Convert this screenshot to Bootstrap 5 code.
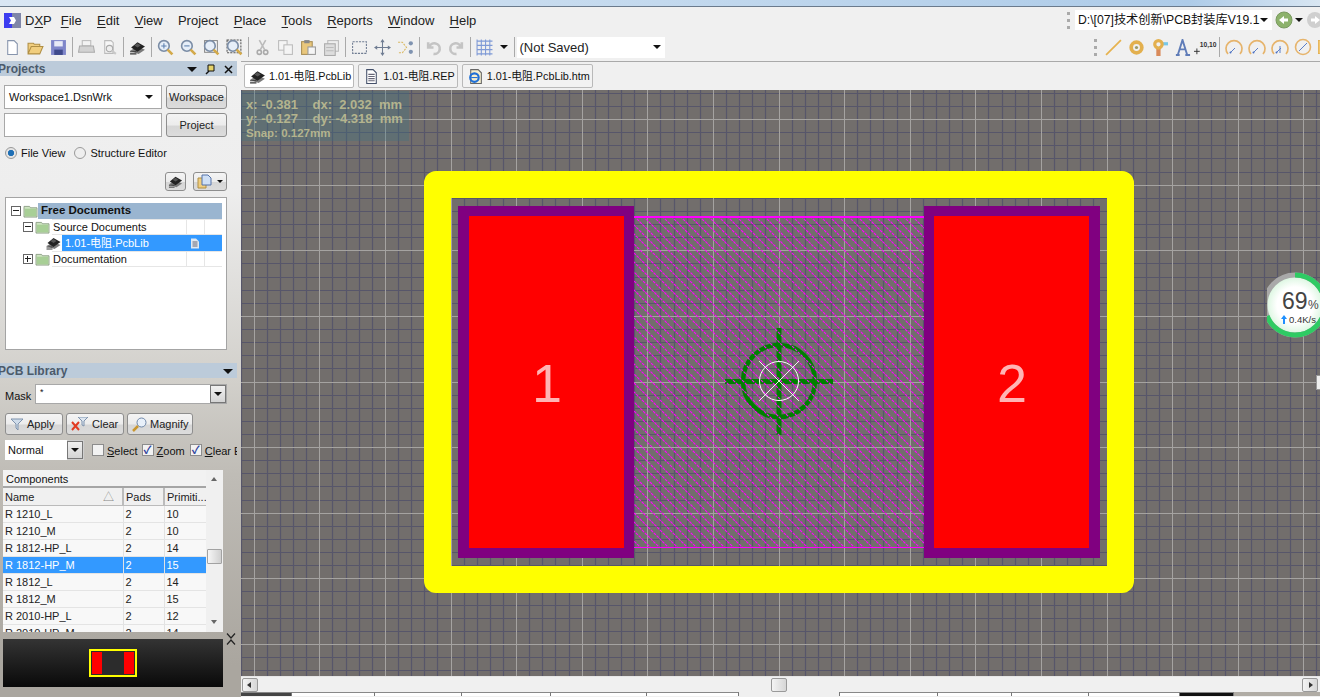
<!DOCTYPE html>
<html lang="en">
<head>
<meta charset="UTF-8" />
<title>DXP - PCB Library</title>
<link href="https://cdn.jsdelivr.net/npm/bootstrap@5.3.0/dist/css/bootstrap.min.css" rel="stylesheet"/>
<style>
  html, body { margin:0; height:697px; overflow:hidden; }
  body { font-family:"Liberation Sans","Noto Sans CJK SC",sans-serif; font-size:11px; color:#111; background:#f0f0f0; line-height:1; }
  .shell { width:1320px; height:697px; overflow:hidden; position:relative; }
  .title-strip { height:6px; background:linear-gradient(90deg,#d9e6f3,#c3d9ee 50%,#adcbe8 90%,#d8e6f2); border-bottom:1px solid #6a7a8c; box-sizing:content-box; }
  .menu-row { height:26px; background:#f0f0f0; padding-left:4px; }
  .dxp-logo { width:17px; height:15px; margin-right:4px; }
  .menu-item { font-size:13px; color:#222; margin-right:15.3px; }
  .menu-item u { text-underline-offset:2px; }
  .addr-box { width:197px; height:20px; background:#fff; font-size:12.2px; padding-left:3px; color:#111; white-space:nowrap; flex:none; }
  .grip { width:4px; height:17px; border-left:3px dotted #aaa; }
  .tool-row { height:28px; background:#f0f0f0; padding-left:.5px; }
  .slot { width:23px; height:22px; flex:none; }
  .slot svg { width:17px; height:17px; }
  .tool-sep { width:5px; height:20px; flex:none; }
  .tool-sep::after { content:""; display:block; width:1px; height:20px; margin-left:2px; background:#a9a9a9; }
  .save-box { width:148px; height:21px; background:#fff; font-size:13px; padding-left:3px; color:#222; }
  .caret-d { width:0; height:0; border-left:4px solid transparent; border-right:4px solid transparent; border-top:4px solid #111; display:block; }
  .tab-row { height:29px; background:#f0f0f0; border-top:1px solid #a9a9a9; padding:2px 0 0 244px; gap:4px; }
  .doc-tab { height:24px; padding:0 2px 0 4px; gap:3px; border:1px solid #b9b9b9; border-radius:2px; font-size:10.8px; background:#f2f2f2; white-space:nowrap; }
  .doc-tab.is-on { background:#fff; }
  .doc-tab svg { width:17px; height:17px; }
  .work { height:606px; }
  .side { width:241px; height:636px; margin-top:-29px; background:linear-gradient(180deg,#f0f0f0 0,#eeeeee 20%,#d2d0cb 50%,#bfbcb6 65%,#aaa69f 95%); z-index:2; position:relative; flex:none; }
  .panel-head { height:15px; width:237px; background:#bccbda; color:#4b5a6b; font-weight:700; font-size:12px; padding-top:1px; }
  .panel-head span.lbl { margin-left:-2px; }
  .field { background:#fff; border:1px solid #a8a8a8; font-size:11px; padding-left:4px; }
  .win-btn { background:linear-gradient(180deg,#f4f4f4 0,#ececec 50%,#d6d6d6 55%,#dcdcdc 100%); border:1px solid #8e8e8e; border-radius:3px; font-size:11px; color:#222; white-space:nowrap; padding-top:1px; }
  .row-a { height:24px; margin:0 14px 0 4px; gap:4px; }
  .radio-dot { width:12px; height:12px; border-radius:50%; border:1px solid #9a9a9a; background:#eee; display:inline-block; }
  .radio-dot.is-on { background:radial-gradient(circle,#1f6fb5 0,#1f6fb5 40%,#e4e4e4 48%); }
  .tree-box { height:153px; margin:7px 14px 0 5px; background:#fff; border:1px solid #a4a4a4; position:relative; padding-top:5px; }
  .tree-line { height:16px; font-size:11px; white-space:nowrap; }
  .tree-line svg { flex:none; }
  .plus-box { width:10px; height:10px; border:1px solid #666; margin-right:2px; position:relative; flex:none; background:#fff; }
  .plus-box::before { content:""; position:absolute; left:1px; right:1px; top:3px; height:2px; border-top:1px solid #222; }
  .plus-box.is-shut::after { content:""; position:absolute; top:1px; bottom:1px; left:3px; width:1px; background:#222; }
  .free-bar { background:#9ab5d0; font-weight:700; flex:1; height:16px; margin-right:4px; padding-left:3px; font-size:11.5px; }
  .cell-a { flex:1; height:16px; border-bottom:1px solid #e6e6e6; border-top:1px solid #e6e6e6; padding-left:1px; }
  .cell-b { width:18px; height:16px; border:1px solid #e6e6e6; border-right:0; }
  .sel-bar { flex:1; height:16px; background:#3399ff; color:#fff; margin-right:4px; padding-left:3px; }
  .lib-btn { height:22px; gap:3px; padding:0 3px 0 4px; }
  .check-a { width:12px; height:12px; border:1px solid #8c8c8c; background:#f2f2f2; flex:none; margin-right:3px; color:#2b3f9c; font-size:11px; font-weight:700; text-align:center; font-style:normal; }
  .drop-b { width:16px; height:18px; background:linear-gradient(#f0f0f0,#d4d4d4); border:1px solid #777; flex:none; }
  .comp-wrap { height:162px; width:220px; margin:10px 0 0 3px; background:#f0f0f0; }
  .comp-tab { width:203px; height:162px; overflow:hidden; background:#f7f7f7; }
  .comp-title { height:18px; padding:4px 0 0 3px; background:#f2f2f2; border-bottom:2px solid #a5a5a5; font-size:11px; }
  .comp-grid { margin:0; width:203px; table-layout:fixed; font-size:11px; border-collapse:collapse; }
  .comp-grid td, .comp-grid th { height:17px; padding:2px 0 0 2px; font-weight:400; background:#f8f8f8; color:#222; border:0; border-right:1px solid #e2e2e2; border-bottom:1px solid #e4e4e4; white-space:nowrap; overflow:hidden; vertical-align:middle; }
  .comp-grid th { background:#f0f0f0; border-right:2px solid #bbb; border-bottom:1px solid #bbb; }
  .comp-grid tr.picked td { background:#3399ff; color:#fff; }
  .comp-bar { width:17px; height:162px; position:relative; background:#f0f0f0; }
  .comp-thumb { position:absolute; left:1px; top:79px; width:15px; height:15px; background:linear-gradient(90deg,#f6f6f6,#d0d0d0); border:1px solid #a2a2a2; border-radius:1px; }
  .ar-up { position:absolute; left:5px; top:7px; width:0; height:0; border-left:3.5px solid transparent; border-right:3.5px solid transparent; border-bottom:4px solid #666; }
  .ar-dn { position:absolute; left:5px; top:150px; width:0; height:0; border-left:3.5px solid transparent; border-right:3.5px solid transparent; border-top:4px solid #666; }
  .mini-view { width:220px; height:48px; margin:7px 0 0 3px; background:linear-gradient(180deg,#343434,#090909); }
  .mini-frame { width:48px; height:28px; border:2px solid #ff0; background:#2c2c2c; padding:1px 1px; }
  .mini-pad { width:10px; height:22px; background:#f00; }
  .mini-close { position:absolute; left:226px; top:572px; }
  .canvas-area { flex:1; height:586px; position:relative; overflow:hidden; background:#726e6c; }
  .canvas-area svg.board { display:block; width:1079px; height:586px; }
  .pad-num { font-family:"Liberation Sans",sans-serif; font-size:54px; fill:#ffb4b4; }
  .hud-box { position:absolute; left:0; top:1px; width:168px; height:50px; background:rgba(60,115,130,.33); color:#b4b48e; font-family:"Liberation Sans",sans-serif; font-weight:700; font-size:13px; padding:7px 0 0 5px; white-space:pre; line-height:14px; }
  .hud-snap { font-size:11.5px; line-height:14px; }
  .hscroll { height:16px; background:#f0f0f0; position:relative; border-top:1px solid #e6e6e6; }
  .hs-btn { position:absolute; top:1px; width:16px; height:14px; background:linear-gradient(90deg,#f4f4f4,#d6d6d6); border:1px solid #999; border-radius:2px; }
  .hs-btn.is-left { left:1px; } .hs-btn.is-right { right:2px; } .hs-btn.is-mid { left:530px; }
  .hs-btn.is-left::after { content:""; position:absolute; left:4px; top:3px; border-right:4px solid #333; border-top:3px solid transparent; border-bottom:3px solid transparent; }
  .hs-btn.is-right::after { content:""; position:absolute; left:6px; top:3px; border-left:4px solid #333; border-top:3px solid transparent; border-bottom:3px solid transparent; }
  .foot-tabs { height:4px; background:#b0aca5; overflow:hidden; }
  .foot-tabs div { height:4px; background:#fff; border-top:1px solid #888; border-right:1px solid #777; }
  .net-ball { position:absolute; left:1267px; top:272px; width:66px; height:66px; z-index:3; }
  .edge-nub { position:absolute; left:1316px; top:375px; width:5px; height:15px; background:#efefef; border:1px solid #999; z-index:3; }
</style>
</head>
<body>
<svg width="0" height="0" class="d-none">
  <defs>
    <symbol id="i-chip" viewBox="0 0 16 16">
      <path d="M1 11l7-4 7 3-6 4z" fill="#7a7a7a"/><path d="M2 8l6-5 7 4-7 5z" fill="#222"/><path d="M5 6l3-2 3 2-3 2z" fill="#555"/><path d="M1 12h6M1 14h6" stroke="#333"/>
    </symbol>
    <symbol id="i-folder" viewBox="0 0 16 14">
      <path d="M1 3V1.500h6l1 1.500h7v10H1z" fill="#cfe5c2" stroke="#8d9f85"/><rect x="2" y="4" width="12" height="8" fill="#a8cf96"/>
    </symbol>
    <symbol id="i-doc" viewBox="0 0 16 16">
      <path d="M3.500 1.500h6l3 3v10h-9z" fill="#fff" stroke="#44506a"/><path d="M5 6h6M5 8h6M5 10h6M5 12h6" stroke="#667"/>
    </symbol>
    <symbol id="i-glass" viewBox="0 0 16 16">
      <circle cx="6.500" cy="6.500" r="5" fill="#e6eef8" stroke="#7b8da6" stroke-width="1.500"/><path d="M10 10l4.500 4.500" stroke="#d3a94a" stroke-width="2.500"/>
    </symbol>
    <symbol id="i-arc" viewBox="0 0 18 18">
      <path d="M3 16A8 8 0 1 1 15 16" fill="none" stroke="#e6b46c" stroke-width="1.700"/><path d="M5 15l5-5" stroke="#5a7ec8"/><circle cx="5.500" cy="14.500" r="1" fill="#4a6ec0"/>
    </symbol>
  </defs>
</svg>

<div class="shell">
  <div class="title-strip"></div>

  <div class="menu-row d-flex align-items-center">
    <svg class="dxp-logo" viewBox="0 0 17 15"><rect width="17" height="15" fill="#7f86a8"/><rect width="8" height="15" fill="#3c3cf0"/><path d="M5 4h5l2 3.500-2 3.500H5l2-3.500z" fill="#fff"/></svg>
    <span class="menu-item" style="margin-right:9px">D<u>X</u>P</span>
    <span class="menu-item"><u>F</u>ile</span>
    <span class="menu-item"><u>E</u>dit</span>
    <span class="menu-item"><u>V</u>iew</span>
    <span class="menu-item">Pro<u>j</u>ect</span>
    <span class="menu-item"><u>P</u>lace</span>
    <span class="menu-item"><u>T</u>ools</span>
    <span class="menu-item"><u>R</u>eports</span>
    <span class="menu-item"><u>W</u>indow</span>
    <span class="menu-item"><u>H</u>elp</span>
    <div class="ms-auto d-flex align-items-center">
      <span class="grip me-1"></span>
      <div class="addr-box d-flex align-items-center justify-content-between"><span>D:\[07]技术创新\PCB封装库V19.1</span><i class="caret-d me-1"></i></div>
      <svg width="18" height="18" viewBox="0 0 18 18" style="margin-left:3px"><circle cx="9" cy="9" r="8" fill="#8db26c" stroke="#7a9a60"/><path d="M4 9l5-4v2.500h4v3H9V13z" fill="#fff"/></svg>
      <i class="caret-d" style="margin-left:2px"></i>
      <svg width="18" height="18" viewBox="0 0 18 18" style="margin:0 -4px 0 3px"><circle cx="9" cy="9" r="8" fill="#cfcfcf"/><path d="M14 9L9 5v2.500H5v3h4V13z" fill="#fff"/></svg>
    </div>
  </div>

  <div class="tool-row d-flex align-items-center">
    <div class="slot d-flex align-items-center justify-content-center"><svg viewBox="0 0 16 16"><path d="M3.500 1.500h6l3 3v10h-9z" fill="#fff" stroke="#8795ad"/></svg></div>
    <div class="slot d-flex align-items-center justify-content-center"><svg viewBox="0 0 16 16"><path d="M1 14V4h5l1 1h5v2H4L1 14l3-7h11l-3 7z" fill="#f1ce7e" stroke="#b08f45"/></svg></div>
    <div class="slot d-flex align-items-center justify-content-center"><svg viewBox="0 0 16 16"><rect x="1" y="1" width="14" height="14" fill="#7f86c9"/><rect x="4" y="2" width="8" height="5" fill="#e8eaf6"/><rect x="4" y="10" width="8" height="5" fill="#3f4a8c"/></svg></div>
    <div class="tool-sep"></div>
    <div class="slot d-flex align-items-center justify-content-center"><svg viewBox="0 0 16 16"><rect x="4" y="1.500" width="8" height="5" fill="#f2f2f2" stroke="#bbb"/><path d="M1.500 6.500h13l1 6h-15z" fill="#d2d2d2" stroke="#aaa"/></svg></div>
    <div class="slot d-flex align-items-center justify-content-center"><svg viewBox="0 0 16 16"><path d="M3.500 1.500h6l2 2v10h-8z" fill="#f6f6f6" stroke="#bbb"/><circle cx="8" cy="9" r="3" fill="#eee" stroke="#aaa"/><path d="M10 11l4 3" stroke="#c8c8c8" stroke-width="2"/></svg></div>
    <div class="tool-sep"></div>
    <div class="slot d-flex align-items-center justify-content-center"><svg><use href="#i-chip"/></svg></div>
    <div class="tool-sep"></div>
    <div class="slot d-flex align-items-center justify-content-center"><svg viewBox="0 0 16 16"><use href="#i-glass"/><path d="M4 6.500h5M6.500 4v5" stroke="#5b7fae"/></svg></div>
    <div class="slot d-flex align-items-center justify-content-center"><svg viewBox="0 0 16 16"><use href="#i-glass"/><path d="M4 6.500h5" stroke="#5b7fae"/></svg></div>
    <div class="slot d-flex align-items-center justify-content-center"><svg viewBox="0 0 16 16"><rect x="1.500" y="1.500" width="12" height="11" fill="#fff" stroke="#888"/><use href="#i-glass"/></svg></div>
    <div class="slot d-flex align-items-center justify-content-center"><svg viewBox="0 0 16 16"><rect x="1" y="1" width="13" height="12" fill="none" stroke="#555" stroke-dasharray="2 1"/><use href="#i-glass"/></svg></div>
    <div class="tool-sep"></div>
    <div class="slot d-flex align-items-center justify-content-center"><svg viewBox="0 0 16 16"><path d="M5 1l5 9M11 1L6 10" stroke="#bbb" stroke-width="1.500"/><circle cx="5" cy="12.500" r="2" fill="none" stroke="#aaa" stroke-width="1.500"/><circle cx="11" cy="12.500" r="2" fill="none" stroke="#aaa" stroke-width="1.500"/></svg></div>
    <div class="slot d-flex align-items-center justify-content-center"><svg viewBox="0 0 16 16"><rect x="1.500" y="1.500" width="8" height="9" fill="#f4f4f4" stroke="#bbb"/><rect x="6.500" y="5.500" width="8" height="9" fill="#f4f4f4" stroke="#bbb"/></svg></div>
    <div class="slot d-flex align-items-center justify-content-center"><svg viewBox="0 0 16 16"><rect x="1.500" y="2.500" width="10" height="12" fill="#e9c77c" stroke="#a98f55"/><rect x="4" y="1" width="5" height="3" fill="#888"/><rect x="7.500" y="7.500" width="7" height="7" fill="#f5f5f5" stroke="#999"/></svg></div>
    <div class="slot d-flex align-items-center justify-content-center"><svg viewBox="0 0 16 16"><rect x="4.500" y="1.500" width="10" height="10" fill="#eee" stroke="#bbb"/><rect x="1.500" y="4.500" width="10" height="11" fill="#ddd" stroke="#aaa"/><path d="M3 8h7M3 11h7" stroke="#bbb"/></svg></div>
    <div class="tool-sep"></div>
    <div class="slot d-flex align-items-center justify-content-center"><svg viewBox="0 0 16 16"><rect x="1.500" y="2.500" width="13" height="11" fill="none" stroke="#6f7c92" stroke-dasharray="2 1"/></svg></div>
    <div class="slot d-flex align-items-center justify-content-center"><svg viewBox="0 0 16 16"><path d="M8 1v14M1 8h14" stroke="#6f7c92"/><path d="M8 0l2 3H6zM8 16l2-3H6zM0 8l3-2v4zM16 8l-3-2v4z" fill="#6f7c92"/></svg></div>
    <div class="slot d-flex align-items-center justify-content-center"><svg viewBox="0 0 16 16"><path d="M1 3l4 0 4 5-4 5H1" fill="none" stroke="#d9b860" stroke-dasharray="2 1"/><circle cx="13" cy="4" r="2" fill="#7f93b0"/><circle cx="13" cy="12" r="2" fill="#7f93b0"/></svg></div>
    <div class="tool-sep"></div>
    <div class="slot d-flex align-items-center justify-content-center"><svg viewBox="0 0 16 16"><path d="M3 3v5h5M4 8a5 5 0 1 1 4 6" fill="none" stroke="#c4c4c4" stroke-width="2.500"/></svg></div>
    <div class="slot d-flex align-items-center justify-content-center"><svg viewBox="0 0 16 16"><path d="M13 3v5H8M12 8a5 5 0 1 0-4 6" fill="none" stroke="#c4c4c4" stroke-width="2.500"/></svg></div>
    <div class="tool-sep"></div>
    <div class="slot d-flex align-items-center justify-content-center"><svg viewBox="0 0 16 16"><path d="M1 .5v15M5 .5v15M9 .5v15M13 .5v15M.5 2h15M.5 6h15M.5 10h15M.5 14h15" stroke="#7f9ad6"/></svg></div>
    <i class="caret-d ms-1 me-1"></i>
    <div class="tool-sep"></div>
    <div class="save-box d-flex align-items-center justify-content-between"><span>(Not Saved)</span><i class="caret-d me-1"></i></div>
    <div class="ms-auto d-flex align-items-center">
      <span class="grip me-1"></span>
      <div class="slot d-flex align-items-center justify-content-center"><svg viewBox="0 0 16 16"><path d="M1 15L15 1" stroke="#e6b24e" stroke-width="1.600"/></svg></div>
      <div class="slot d-flex align-items-center justify-content-center"><svg viewBox="0 0 16 16"><circle cx="8" cy="8" r="5" fill="none" stroke="#e3b04e" stroke-width="3.500"/><circle cx="8" cy="8" r="1.500" fill="#996"/></svg></div>
      <div class="slot d-flex align-items-center justify-content-center"><svg viewBox="0 0 16 16"><path d="M10 3h6v3h-6z" fill="#78c8e8"/><path d="M5 9h4v7H5z" fill="#d98a5a"/><circle cx="7" cy="5" r="3.500" fill="none" stroke="#e3b04e" stroke-width="3"/></svg></div>
      <div class="slot d-flex align-items-center justify-content-center"><svg viewBox="0 0 18 18"><path d="M2 17h4M12 17h5M4 17L9 1l5 16M6 11h6" fill="none" stroke="#5f7cb8" stroke-width="2"/></svg></div>
      <div class="slot d-flex align-items-center justify-content-center"><svg viewBox="0 0 24 16" style="width:24px"><path d="M0 12h6M3 9v6" stroke="#333"/><text x="6" y="8" font-size="7" font-family="Liberation Sans" font-weight="700" fill="#333">10,10</text></svg></div>
      <div class="tool-sep"></div>
      <div class="slot d-flex align-items-center justify-content-center"><svg style="width:18px;height:18px"><use href="#i-arc"/></svg></div>
      <div class="slot d-flex align-items-center justify-content-center"><svg style="width:18px;height:18px"><use href="#i-arc"/></svg></div>
      <div class="slot d-flex align-items-center justify-content-center"><svg style="width:18px;height:18px"><use href="#i-arc"/><path d="M9 8v7" stroke="#5a7ec8"/></svg></div>
      <div class="slot d-flex align-items-center justify-content-center"><svg viewBox="0 0 18 18" style="width:18px;height:18px"><circle cx="9" cy="9" r="7.500" fill="none" stroke="#e6b46c" stroke-width="1.600"/><path d="M5 13l8-8" stroke="#5a7ec8"/></svg></div>
      <svg width="10" height="14" viewBox="0 0 10 14" class="ms-1" style="margin-right:-8px"><rect width="10" height="14" fill="#f4c76e" stroke="#d8a850"/></svg>
    </div>
  </div>

  <div class="tab-row d-flex align-items-start">
    <div class="doc-tab is-on d-flex align-items-center"><svg><use href="#i-chip"/></svg><span>1.01-电阻.PcbLib</span></div>
    <div class="doc-tab d-flex align-items-center"><svg><use href="#i-doc"/></svg><span>1.01-电阻.REP</span></div>
    <div class="doc-tab d-flex align-items-center"><svg viewBox="0 0 16 16"><path d="M3.500 1.500h7l3 3v10h-10z" fill="#f6efcf" stroke="#666"/><circle cx="7" cy="9" r="4" fill="none" stroke="#1f6fd6" stroke-width="2"/><path d="M4 9h6" stroke="#1f6fd6"/></svg><span>1.01-电阻.PcbLib.htm</span></div>
  </div>

  <div class="work d-flex">
    <aside class="side">
      <div class="panel-head d-flex align-items-center"><span class="lbl">Projects</span>
        <span class="ms-auto d-flex align-items-center gap-1 pe-1">
          <i class="caret-d" style="border-left-width:5px;border-right-width:5px;border-top-width:5px"></i>
          <svg width="11" height="11" viewBox="0 0 11 11" class="mx-1"><path d="M3 1h6v6H3z" fill="#e5d26a" stroke="#111"/><path d="M1 10l3-3" stroke="#111" stroke-width="1.500"/></svg>
          <svg width="9" height="9" viewBox="0 0 9 9"><path d="M1 1l7 7M8 1L1 8" stroke="#111" stroke-width="1.500"/></svg>
        </span>
      </div>

      <div class="row-a d-flex" style="margin-top:9px">
        <div class="field d-flex align-items-center justify-content-between" style="width:158px;height:24px"><span>Workspace1.DsnWrk</span><span class="me-1 px-1"><i class="caret-d"></i></span></div>
        <button class="win-btn" style="width:61px;height:24px;padding:1px 0 0" type="button">Workspace</button>
      </div>
      <div class="row-a d-flex" style="margin-top:4px">
        <div class="field" style="width:158px;height:24px"></div>
        <button class="win-btn" style="width:61px;height:24px;padding:1px 0 0" type="button">Project</button>
      </div>
      <div class="d-flex align-items-center" style="height:16px;margin:8px 0 0 5px;white-space:nowrap">
        <i class="radio-dot is-on me-1"></i><span style="margin-right:9px">File View</span><i class="radio-dot me-1"></i><span>Structure Editor</span>
      </div>
      <div class="d-flex justify-content-end" style="height:18px;margin:11px 14px 0 0;gap:7px">
        <button class="win-btn d-flex align-items-center justify-content-center" style="width:21px;height:19px;padding:0" type="button"><svg width="15" height="15"><use href="#i-chip"/></svg></button>
        <button class="win-btn d-flex align-items-center justify-content-center gap-1" style="width:34px;height:19px;padding:0" type="button"><svg width="16" height="15" viewBox="0 0 16 15"><path d="M1 14V4h4l1-1h3v11z" fill="#f1ce7e" stroke="#b08f45"/><path d="M5 1h6l3 3v7H5z" fill="#cfe0f6" stroke="#5572a8"/></svg><i class="caret-d" style="border-left-width:3px;border-right-width:3px;border-top-width:3px"></i></button>
      </div>

      <div class="tree-box">
        <div class="tree-line d-flex align-items-center" style="padding-left:5px"><i class="plus-box"></i><svg width="15" height="13" class="me-1"><use href="#i-folder"/></svg><div class="free-bar d-flex align-items-center" style="margin-left:-4px">Free Documents</div></div>
        <div class="tree-line d-flex align-items-center" style="padding-left:17px"><i class="plus-box"></i><svg width="15" height="13" style="margin-right:4px"><use href="#i-folder"/></svg><div class="cell-a d-flex align-items-center" style="margin-left:-2px">Source Documents</div><div class="cell-b"></div><div class="cell-b" style="margin-right:4px"></div></div>
        <div class="tree-line d-flex align-items-center" style="padding-left:39px"><svg width="17" height="16"><use href="#i-chip"/></svg><div class="sel-bar d-flex align-items-center justify-content-between"><span>1.01-电阻.PcbLib</span><svg width="10" height="11" viewBox="0 0 10 11" style="margin-right:22px"><path d="M1 .5h5l3 3v7H1z" fill="#dfe8f2"/><path d="M2.500 4h5M2.500 6h5M2.500 8h5" stroke="#667"/></svg></div></div>
        <div class="tree-line d-flex align-items-center" style="padding-left:17px"><i class="plus-box is-shut"></i><svg width="15" height="13" style="margin-right:4px"><use href="#i-folder"/></svg><div class="cell-a d-flex align-items-center" style="margin-left:-2px">Documentation</div><div class="cell-b"></div><div class="cell-b" style="margin-right:4px"></div></div>
      </div>

      <div class="panel-head d-flex align-items-center" style="margin-top:13px"><span class="lbl">PCB Library</span><span class="ms-auto pe-1"><i class="caret-d" style="border-left-width:5px;border-right-width:5px;border-top-width:5px"></i></span></div>

      <div class="d-flex align-items-center" style="height:20px;margin:6px 14px 0 5px">
        <span style="width:30px;padding-top:4px">Mask</span>
        <div class="field d-flex justify-content-between flex-grow-1" style="height:20px"><span style="padding-top:3px;font-size:9px">*</span><span class="drop-b d-flex align-items-center justify-content-center"><i class="caret-d"></i></span></div>
      </div>
      <div class="d-flex" style="margin:9px 0 0 5px;gap:3px">
        <button class="win-btn lib-btn d-flex align-items-center" style="width:58px" type="button"><svg width="14" height="14" viewBox="0 0 14 14"><path d="M1 2h12L8 7v6L6 11V7z" fill="#cfdcea" stroke="#7f93ad"/></svg>Apply</button>
        <button class="win-btn lib-btn d-flex align-items-center" style="width:58px" type="button"><svg width="18" height="14" viewBox="0 0 18 14"><path d="M7 0h10l-4 4v5l-2-1V4z" fill="#dde6f0" stroke="#7f93ad"/><path d="M1 5l7 8M8 5l-7 8" stroke="#e23b22" stroke-width="2"/></svg>Clear</button>
        <button class="win-btn lib-btn d-flex align-items-center" style="width:66px" type="button"><svg width="15" height="15" viewBox="0 0 15 15"><circle cx="9.500" cy="5.500" r="4.500" fill="#e8f0fa" stroke="#6f87a8"/><path d="M6 9l-5 5" stroke="#c9962f" stroke-width="2.500"/></svg>Magnify</button>
      </div>
      <div class="d-flex align-items-center" style="height:20px;margin:5px 0 0 5px;white-space:nowrap;overflow:hidden;width:232px">
        <div class="d-flex justify-content-between align-items-center" style="width:79px;height:20px;background:#cfcfcf;margin-right:8px"><span class="d-flex align-items-center" style="background:#fff;width:62px;height:20px;padding:1px 0 0 3px">Normal</span><span class="drop-b d-flex align-items-center justify-content-center" style="height:18px;margin-right:1px"><i class="caret-d"></i></span></div>
        <i class="check-a"></i><span style="margin-right:4px;padding-top:2px"><u>S</u>elect</span>
        <i class="check-a">✓</i><span style="margin-right:5px;padding-top:2px"><u>Z</u>oom</span>
        <i class="check-a">✓</i><span style="padding-top:2px"><u>C</u>lear Existing</span>
      </div>

      <div class="comp-wrap d-flex">
        <div class="comp-tab">
          <div class="comp-title">Components</div>
          <table class="comp-grid">
            <colgroup><col style="width:120px"/><col style="width:41px"/><col style="width:42px"/></colgroup>
            <thead><tr><th>Name<span class="float-end pe-2 text-black-50">△</span></th><th>Pads</th><th style="border-right:0">Primiti...</th></tr></thead>
            <tbody>
              <tr><td>R 1210_L</td><td>2</td><td>10</td></tr>
              <tr><td>R 1210_M</td><td>2</td><td>10</td></tr>
              <tr><td>R 1812-HP_L</td><td>2</td><td>14</td></tr>
              <tr class="picked"><td>R 1812-HP_M</td><td>2</td><td>15</td></tr>
              <tr><td>R 1812_L</td><td>2</td><td>14</td></tr>
              <tr><td>R 1812_M</td><td>2</td><td>15</td></tr>
              <tr><td>R 2010-HP_L</td><td>2</td><td>12</td></tr>
              <tr><td>R 2010-HP_M</td><td>2</td><td>14</td></tr>
            </tbody>
          </table>
        </div>
        <div class="comp-bar"><i class="ar-up"></i><i class="comp-thumb"></i><i class="ar-dn"></i></div>
      </div>

      <svg class="mini-close" width="10" height="12" viewBox="0 0 10 12"><path d="M1 .5l4 4.500 4-4.500M1 11.500l4-4.500 4 4.500" fill="none" stroke="#222" stroke-width="1.200"/></svg>
      <div class="mini-view d-flex align-items-center justify-content-center">
        <div class="mini-frame d-flex justify-content-between align-items-center"><i class="mini-pad"></i><i class="mini-pad"></i></div>
      </div>
    </aside>

    <div class="flex-grow-1 d-flex flex-column">
      <div class="canvas-area">
        <svg class="board" viewBox="241 91 1079 586" id="board" shape-rendering="crispEdges">
          <defs><clipPath id="hatch-clip"><rect x="634" y="217" width="290" height="332"/></clipPath></defs>
          <g id="grid-lines" shape-rendering="auto"></g>
          <path d="M436 172H1122a12 12 0 0 1 12 12V582a12 12 0 0 1-12 12H436a12 12 0 0 1-12-12V184a12 12 0 0 1 12-12zM451 199V567H1107V199z" fill="#ff0" fill-rule="evenodd" shape-rendering="auto"/>
          <rect x="458" y="207" width="176" height="352" fill="#800080"/>
          <rect x="924" y="207" width="176" height="352" fill="#800080"/>
          <rect x="469" y="217" width="155" height="332" fill="#f00"/>
          <rect x="934" y="217" width="155" height="332" fill="#f00"/>
          <text class="pad-num" x="547" y="403" text-anchor="middle" shape-rendering="auto">1</text>
          <text class="pad-num" x="1012" y="403" text-anchor="middle" shape-rendering="auto">2</text>
          <g shape-rendering="auto" fill="none">
            <circle cx="779" cy="382" r="36" stroke="#008000" stroke-width="4.500"/>
            <path d="M725 382.500H833M779 329V436" stroke="#008000" stroke-width="5"/>
          </g>
          <g id="hatch" clip-path="url(#hatch-clip)" shape-rendering="auto"></g>
          <path d="M634 218H924M634 548.500H924" stroke="#f0f"/>
          <path d="M634 217.500H924" stroke="#f0f"/>
          <g shape-rendering="auto" fill="none">
            <circle cx="779" cy="382" r="19.500" stroke="#fff" stroke-width="1"/>
            <path d="M759 362l40 40M799 362l-40 40" stroke="#fff" stroke-width=".9"/>
          </g>
        </svg>
        <div class="hud-box">x: -0.381    dx:  2.032  mm
y: -0.127    dy: -4.318  mm
<span class="hud-snap">Snap: 0.127mm</span></div>
      </div>
      <div class="hscroll"><i class="hs-btn is-left"></i><i class="hs-btn is-mid"></i><i class="hs-btn is-right"></i></div>
      <div class="foot-tabs d-flex">
        <div style="width:51px;background:#444"></div><div style="width:83px"></div><div style="width:87px"></div><div style="width:89px"></div><div style="width:96px"></div><div style="width:92px"></div><div style="width:101px;background:#f0f0f0;border-top:0"></div><div style="width:98px"></div><div style="width:74px"></div><div style="width:77px"></div><div style="width:91px"></div><div style="width:54px;background:#111"></div>
      </div>
    </div>
  </div>

  <svg class="net-ball" viewBox="0 0 66 66">
    <defs><radialGradient id="ball-fill"><stop offset=".6" stop-color="#fff"/><stop offset="1" stop-color="#d6f5dc"/></radialGradient></defs>
    <circle cx="28" cy="33" r="30" fill="url(#ball-fill)" stroke="#a9a9a9" stroke-width="5"/>
    <circle cx="28" cy="33" r="30" fill="none" stroke="#2ecb63" stroke-width="5" stroke-dasharray="130 58.500" transform="rotate(-90 28 33)"/>
    <text x="15" y="37" font-family="Liberation Sans" font-size="23" fill="#444">69</text>
    <text x="41" y="37" font-family="Liberation Sans" font-size="12" fill="#444">%</text>
    <path d="M17 43l-3 4h2v5h2v-5h2z" fill="#1e8fff"/>
    <text x="22" y="51" font-family="Liberation Sans" font-size="9.500" fill="#333">0.4K/s</text>
  </svg>
  <div class="edge-nub"></div>
</div>

<script src="https://cdn.jsdelivr.net/npm/bootstrap@5.3.0/dist/js/bootstrap.bundle.min.js"></script>
<script>
// grid and pad hatch
const NS = 'http://www.w3.org/2000/svg';
function addLine(parent, x1, y1, x2, y2, color, width, dash) {
  const l = document.createElementNS(NS, 'line');
  l.setAttribute('x1', x1); l.setAttribute('y1', y1);
  l.setAttribute('x2', x2); l.setAttribute('y2', y2);
  l.setAttribute('stroke', color);
  l.setAttribute('stroke-width', width);
  if (dash) l.setAttribute('stroke-dasharray', dash);
  parent.appendChild(l);
}
const grid = document.getElementById('grid-lines');
const step = 13.12, ox = 778.5, oy = 382.5;
for (let pass = 0; pass < 2; pass++) {
  for (let i = -42; i <= 42; i++) {
    const major = i % 5 === 0;
    if (major !== (pass === 1)) continue;
    const x = Math.round(ox + i * step) + .5;
    addLine(grid, x, 91, x, 677, major ? '#a5a3a1' : '#57566a', major ? 1 : 1.2);
  }
  for (let i = -24; i <= 24; i++) {
    const major = i % 5 === 0;
    if (major !== (pass === 1)) continue;
    const y = Math.round(oy + i * step) + .5;
    addLine(grid, 241, y, 1320, y, major ? '#a5a3a1' : '#57566a', major ? 1 : 1.2);
  }
}
const hatch = document.getElementById('hatch');
for (let x = 300; x < 930; x += 9.28) addLine(hatch, Math.round(x), 217, Math.round(x) + 332, 549, '#ff00ff', 1.1, '3 1');
</script>
</body>
</html>
